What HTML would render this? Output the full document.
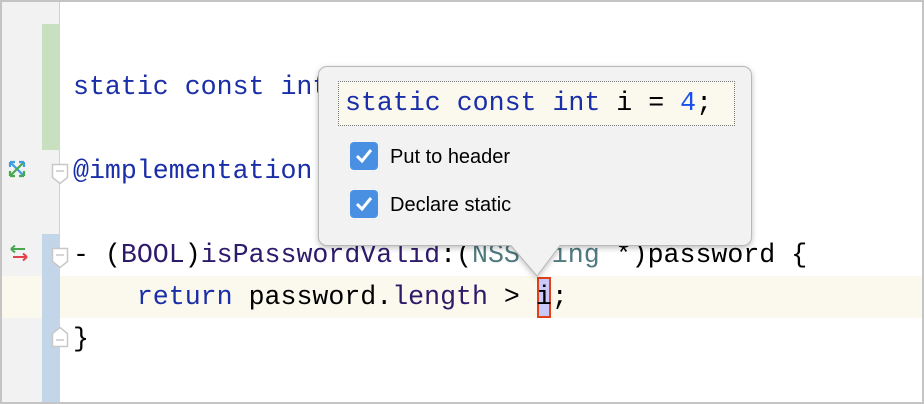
<!DOCTYPE html>
<html><head><style>
*{margin:0;padding:0;box-sizing:border-box}
body{width:924px;height:404px;position:relative;background:#fff;overflow:hidden;font-family:"Liberation Mono",monospace}
.frame{position:absolute;left:0;top:0;width:924px;height:404px;border:2px solid #c4c4c4;z-index:20;pointer-events:none}
.gut{position:absolute;left:0;top:0;width:60px;height:404px;background:#f2f2f2;border-right:1px solid #d0d0d0}
.l{position:absolute;left:73px;font-size:26.6px;line-height:42px;height:42px;white-space:pre;color:#000}
.k{color:#1a2ea8}.p{color:#2e1a6b}.t{color:#4f7a80}
.fold{position:absolute;left:51px;width:18px;height:22px}
</style></head><body>
<div class="gut"></div>
<div style="position:absolute;left:2px;top:276px;width:922px;height:42px;background:#fbf9ee"></div>
<div style="position:absolute;left:42px;top:24px;width:18px;height:126px;background:#c8dfc0"></div>
<div style="position:absolute;left:42px;top:234px;width:18px;height:170px;background:#c3d5e8"></div>
<svg style="position:absolute;left:8px;top:160px" width="18" height="18" viewBox="0 0 18 18"><g stroke-width="2.2" fill="none"><path d="M3 3L15 15" stroke="#3d9ee0"/><path d="M15 3L3 15" stroke="#49a84f"/><path d="M2 2h5M2 2v5" stroke="#3d9ee0"/><path d="M16 2h-5M16 2v5" stroke="#3d9ee0"/><path d="M2 16h5M2 16v-5" stroke="#49a84f"/><path d="M16 16h-5M16 16v-5" stroke="#49a84f"/></g></svg>
<svg style="position:absolute;left:8px;top:244px" width="22" height="20" viewBox="0 0 22 20"><path d="M3 5h14M3 5l4-3.5M3 5l4 3.5" stroke="#49a84f" stroke-width="2" fill="none"/><path d="M5 13h14M19 13l-4-3.5M19 13l-4 3.5" stroke="#e0434b" stroke-width="2" fill="none"/></svg>
<svg class="fold" style="top:163px" viewBox="0 0 18 22"><path d="M1.5 1.5h15v13l-7.5 6-7.5-6z" fill="#fff" stroke="#c8c8c8" stroke-width="1.5"/><path d="M5 8h8" stroke="#bbb" stroke-width="1.2"/></svg>
<svg class="fold" style="top:247px" viewBox="0 0 18 22"><path d="M1.5 1.5h15v13l-7.5 6-7.5-6z" fill="#fff" stroke="#c8c8c8" stroke-width="1.5"/><path d="M5 8h8" stroke="#bbb" stroke-width="1.2"/></svg>
<svg class="fold" style="top:326px" viewBox="0 0 18 22"><path d="M1.5 20.5h15v-13l-7.5-6-7.5 6z" fill="#fff" stroke="#c8c8c8" stroke-width="1.5"/><path d="M5 14h8" stroke="#bbb" stroke-width="1.2"/></svg>
<div class="l" style="top:66px"><span class="k">static const int</span></div>
<div class="l k" style="top:150px">@implementation</div>
<div class="l" style="top:234px">- (<span class="p">BOOL</span>)<span class="p">isPasswordValid</span>:(<span class="t">NSString</span> *)password {</div>
<div style="position:absolute;left:537px;top:277px;width:14px;height:41px;background:#c8c8fa;border:2px solid #e0401c"></div>
<div class="l" style="top:276px">    <span class="k">return</span> password.<span class="p">length</span> &gt; i;</div>
<div class="l" style="top:318px">}</div>
<svg style="position:absolute;left:318px;top:66px;z-index:10;filter:drop-shadow(0 2px 3px rgba(0,0,0,.25))" width="436" height="214" viewBox="0 0 436 214"><path d="M9 0.5H425a8.5 8.5 0 0 1 8.5 8.5V171a8.5 8.5 0 0 1-8.5 8.5H242L219 210 193 179.5H9A8.5 8.5 0 0 1 .5 171V9A8.5 8.5 0 0 1 9 .5z" fill="#f2f2f2" stroke="#b8b8b8"/></svg>
<div style="position:absolute;z-index:11;left:338px;top:81px;width:397px;height:45px;background:#fbf9ee;border:1.5px dotted #777;font-size:26.6px;line-height:42px;padding-left:6px;white-space:pre"><span class="k">static const int</span> i = <span style="color:#1750eb">4</span>;</div>
<div style="position:absolute;z-index:11;left:350px;top:142px;width:28px;height:28px;background:#4a90e2;border-radius:4px"><svg width="28" height="28"><path d="M7 14l5 5 9-11" stroke="#fff" stroke-width="3" fill="none"/></svg></div>
<div style="position:absolute;z-index:11;left:350px;top:190px;width:28px;height:28px;background:#4a90e2;border-radius:4px"><svg width="28" height="28"><path d="M7 14l5 5 9-11" stroke="#fff" stroke-width="3" fill="none"/></svg></div>
<div style="position:absolute;z-index:11;left:390px;top:144px;font:20px 'Liberation Sans',sans-serif;line-height:26px">Put to header</div>
<div style="position:absolute;z-index:11;left:390px;top:192px;font:20px 'Liberation Sans',sans-serif;line-height:26px">Declare static</div>
<div class="frame"></div>
</body></html>
